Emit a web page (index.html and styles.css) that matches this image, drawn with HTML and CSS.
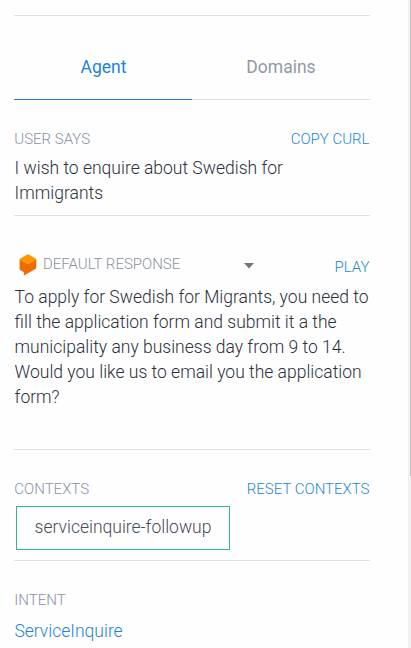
FILE: index.html
```html
<!DOCTYPE html>
<html lang="en">
<head>
<meta charset="utf-8">
<title>Agent</title>
<link rel="stylesheet" href="styles.css">
</head>
<body>
<main class="panel">
  <nav class="tabs">
    <a class="tab tab-active">Agent</a>
    <a class="tab">Domains</a>
  </nav>
  <section class="section user">
    <header class="row"><span class="label">USER SAYS</span><a class="action copy">COPY CURL</a></header>
    <p class="text">I wish to enquire about Swedish for<br>Immigrants</p>
  </section>
  <section class="section response">
    <header class="row">
      <div class="select">
        <svg class="logo" width="18" height="22" viewBox="0 0 18 22">
          <path fill="#ef6c00" d="M.6 5.3v9.800c0 .5.2.8.6 1l3.700 2.100v3.300l11.500-6.500c.6-.3.900-.8.900-1.400V5.300L9 10z"/>
          <path fill="#ff9800" d="M8.200.6 1 4.700c-.5.300-.5.800 0 1.100L9 10.200l8-4.400c.5-.3.5-.8 0-1.100L9.700.6c-.5-.3-1-.3-1.500 0z"/>
        </svg>
        <span class="label default">DEFAULT RESPONSE</span>
        <svg class="caret" width="10" height="6" viewBox="0 0 10 6"><path fill="#757575" d="M0 0h10L5 5.500z"/></svg>
      </div>
      <a class="action play">PLAY</a>
    </header>
    <p class="text">To apply for Swedish for Migrants, you need to<br>fill the application form and submit it a the<br>municipality any business day from 9 to 14.<br>Would you like us to email you the application<br>form?</p>
  </section>
  <section class="section contexts">
    <header class="row"><span class="label">CONTEXTS</span><a class="action reset">RESET CONTEXTS</a></header>
    <div class="chip">serviceinquire-followup</div>
  </section>
  <section class="intent">
    <header class="row"><span class="label">INTENT</span></header>
    <a class="intent-link">ServiceInquire</a>
  </section>
</main>
<aside class="scrollbar"><div class="thumb"></div></aside>
</body>
</html>
```
FILE: styles.css
```css
* { box-sizing: border-box; }
body {
  margin: 0;
  height: 648px;
  overflow: hidden;
  display: flex;
  justify-content: space-between;
  background: #fefefe;
  font: 300 17.5px/25px Roboto, sans-serif;
  color: #2b303b;
}
.panel { width: 356px; margin: 15px 0 0 14px; }
.tabs { display: flex; height: 85px; border-top: 1px solid #e0e0e0; }
.tab {
  width: 50%;
  padding-top: 39px;
  border-bottom: 1px solid #e0e0e0;
  text-align: center;
  font-weight: 400;
  color: #9199a7;
}
.tab-active { padding-left: 1px; color: #1b83da; border-bottom-color: #1b83da; }
.section { border-bottom: 1px solid #e0e0e0; }
.row { display: flex; justify-content: space-between; height: 20px; padding-right: 0.5px; line-height: 20px; font-size: 15px; }
.label { padding-left: 0.3px; color: #8a919e; }
.action { color: #2785d8; }
.text { margin: 0; padding-left: 0.6px; white-space: nowrap; }
.user { height: 116px; padding-top: 29px; }
.user .text { margin-top: 7px; }
.response { height: 234px; padding-top: 38px; }
.response .text { margin-top: 11px; }
.select { display: flex; width: 240px; padding-left: 5px; }
.logo { flex: none; }
.default { margin-left: 5.7px; }
.caret { margin: 9px 0 0 auto; flex: none; }
.play { padding-top: 3px; }
.contexts { height: 111px; padding-top: 29px; }
.chip {
  width: 214px;
  height: 44px;
  margin: 7px 0 0 2px;
  border: 1px solid #35b597;
  line-height: 40px;
  text-align: center;
  color: #454b56;
}
.intent { padding-top: 29px; }
.intent-link { display: block; margin: 9px 0 0 0.4px; color: #1b83da; }
.scrollbar { width: 3px; background: #f1f1f1; }
.thumb { width: 1px; height: 476px; margin-left: 2px; background: #c1c1c1; }
```
